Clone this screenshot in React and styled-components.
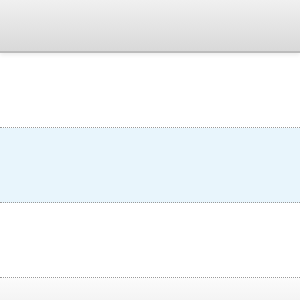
import React from "react";
import styled, { createGlobalStyle } from "styled-components";

const GlobalStyle = createGlobalStyle`
  html, body {
    margin: 0;
    padding: 0;
    background: #fff;
    font-family: "Liberation Sans", Arial, sans-serif;
  }
`;

const Page = styled.div`
  display: flex;
  flex-direction: column;
  height: 300px;
  overflow: hidden;
`;

const Header = styled.div`
  position: relative;
  z-index: 1;
  height: 51px;
  flex-shrink: 0;
  background: linear-gradient(to bottom, #f0f0f0 0%, #d9d9d9 100%);
  border-bottom: 2px solid #bcbcbc;
  box-shadow: 0 2px 4px rgba(0, 0, 0, 0.08);
`;

const List = styled.div`
  display: flex;
  flex-direction: column;
  flex: 1;
`;

const Row = styled.div`
  height: 74px;
  flex-shrink: 0;
  background: ${(p) => (p.$selected ? "#e8f5fc" : "#fff")};
  border-bottom: 1px dotted #9a9a9a;
`;

const Filler = styled.div`
  flex: 1;
  background: linear-gradient(to bottom, #fbfbfb, #f4f4f4);
`;

export default function App() {
  return (
    <Page>
      <GlobalStyle />
      <Header />
      <List>
        <Row />
        <Row $selected />
        <Row />
        <Filler />
      </List>
    </Page>
  );
}
